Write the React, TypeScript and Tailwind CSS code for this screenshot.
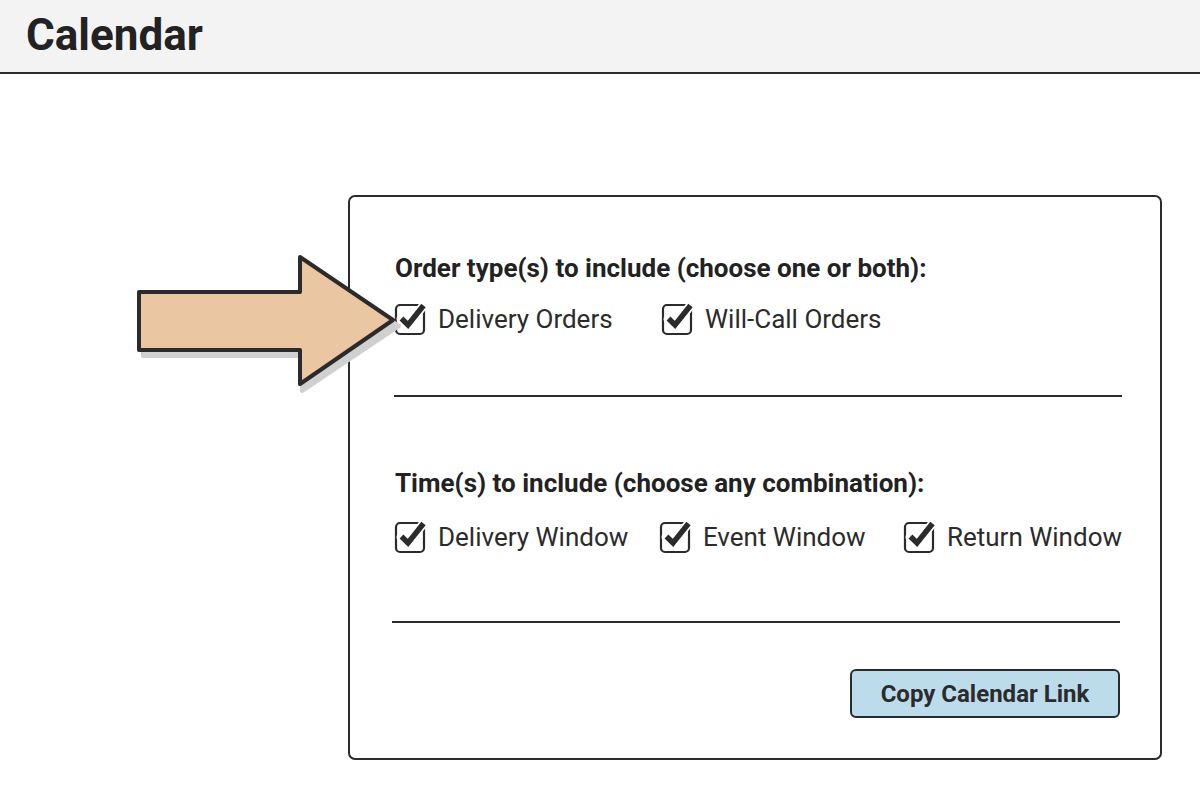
import React from "react";

function CheckIcon() {
  return (
    <svg width="34" height="34" viewBox="0 0 34 34" className="shrink-0">
      <rect x="2" y="3" width="28" height="29" rx="4" fill="none" stroke="#2b2b2b" strokeWidth="2.2" />
      <path d="M7 17 L14 23.5 L29 4" fill="none" stroke="#ffffff" strokeWidth="9" strokeLinecap="round" strokeLinejoin="round" />
      <path d="M7.5 16.5 L14 23 L29.5 3.5" fill="none" stroke="#2b2b2b" strokeWidth="5.5" strokeLinecap="butt" strokeLinejoin="miter" />
    </svg>
  );
}

function Item({ label, w }: { label: string; w?: string }) {
  return (
    <div className={`flex items-center gap-[10px] h-[34px] ${w ?? ""}`}>
      <CheckIcon />
      <span className="text-[26px] leading-[34px] text-[#2b2b2b]">{label}</span>
    </div>
  );
}

export default function App() {
  return (
    <div className="relative w-[1200px] h-[800px] bg-white overflow-hidden" style={{ fontFamily: "Roboto, 'Liberation Sans', sans-serif" }}>
      <header className="h-[74px] bg-[#f3f3f3] border-b-2 border-[#2e2e2e] flex items-center pl-[26px]">
        <h1 className="text-[44px] font-bold text-[#222] leading-none mt-[-2px]">Calendar</h1>
      </header>

      <div className="ml-[348px] mt-[121px] w-[814px] h-[565px] border-2 border-[#2b2b2b] rounded-[7px] pt-[56px] pl-[44px] pr-[38px]">
        <h2 className="text-[26px] font-bold text-[#222] leading-[30px] ml-[1px] whitespace-nowrap">Order type(s) to include (choose one or both):</h2>
        <div className="flex items-center mt-[19px]">
          <Item label="Delivery Orders" w="w-[267px]" />
          <Item label="Will-Call Orders" />
        </div>
        <div className="h-[2px] bg-[#2b2b2b] mt-[59px]" />

        <h2 className="text-[26px] font-bold text-[#222] leading-[30px] mt-[71px] ml-[1px] whitespace-nowrap">Time(s) to include (choose any combination):</h2>
        <div className="flex items-center mt-[22px] whitespace-nowrap">
          <Item label="Delivery Window" w="w-[267px]" />
          <Item label="Event Window" w="w-[246px]" />
          <Item label="Return Window" />
        </div>
        <div className="h-[2px] bg-[#2b2b2b] mt-[67px] ml-[-2px] mr-[2px]" />

        <div className="flex justify-end mt-[46px] mr-[2px]">
          <button className="w-[270px] h-[49px] bg-[#bcdcec] border-2 border-[#2b2b2b] rounded-[6px] text-[24px] font-bold text-[#2b2b2b]">
            Copy Calendar Link
          </button>
        </div>
      </div>

      <svg className="absolute left-0 top-0 pointer-events-none" width="1200" height="800" viewBox="0 0 1200 800">
        <path d="M143 298 L302 298 L302 262 L399 326 L302 391 L302 356 L143 356 Z" fill="#d0d0d0" stroke="#d0d0d0" strokeWidth="4" strokeLinejoin="round" />
        <path d="M139 292 L300 292 L300 257 L393 320 L300 384 L300 350 L139 350 Z" fill="#eac6a3" stroke="#2b2b2b" strokeWidth="4" strokeLinejoin="round" />
      </svg>
    </div>
  );
}
